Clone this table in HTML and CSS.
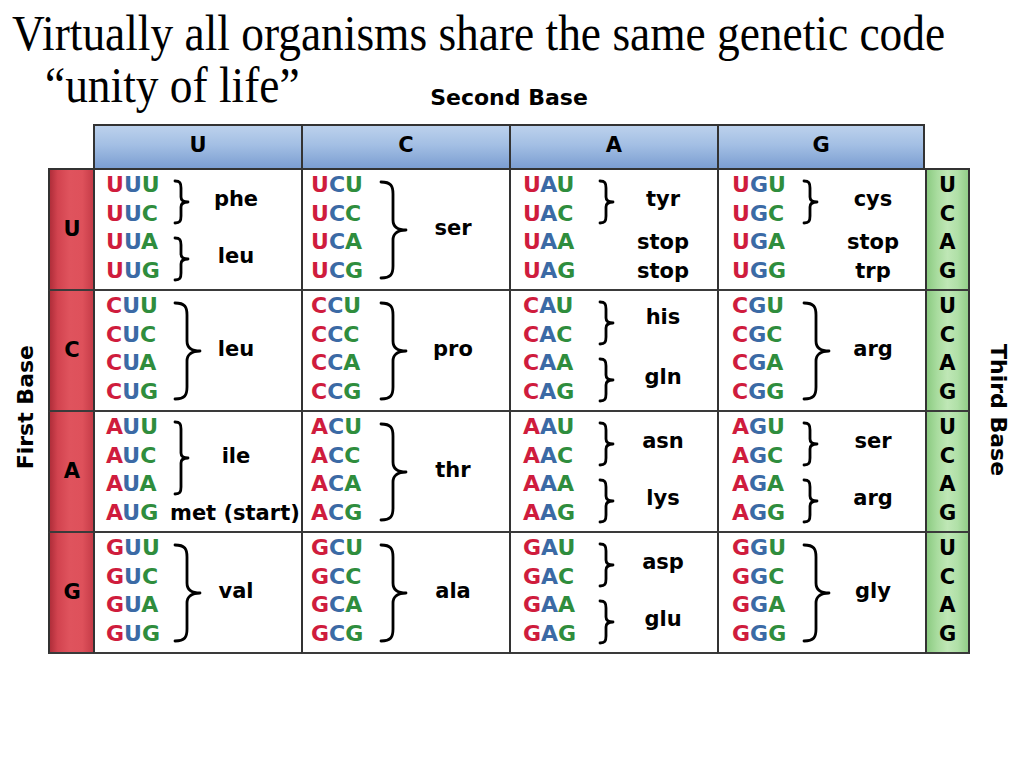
FILE: index.html
```html
<!DOCTYPE html>
<html>
<head>
<meta charset="utf-8">
<link rel="stylesheet" href="styles.css">
</head>
<body>
<div class="title">
  <div class="t1"><span class="sq">Virtually all organisms share the same genetic code</span></div>
  <div class="t2">
    <div class="quote"><span class="sq">“unity of life”</span></div>
    <div class="second">Second Base</div>
  </div>
</div>

<div class="table">
  <div class="hd h1">U</div>
  <div class="hd h2">C</div>
  <div class="hd h3">A</div>
  <div class="hd h4">G</div>

  <div class="firstbase">First Base</div>
  <div class="thirdbase">Third Base</div>

  <!-- Row U -->
  <div class="rc row1 first">U</div>
  <div class="cell cu row1">
    <div class="cod"><i class="r">U</i><i class="b">U</i><i class="g">U</i></div>
    <div class="cod"><i class="r">U</i><i class="b">U</i><i class="g">C</i></div>
    <div class="cod"><i class="r">U</i><i class="b">U</i><i class="g">A</i></div>
    <div class="cod"><i class="r">U</i><i class="b">U</i><i class="g">G</i></div>
    <svg class="brace b2 r12" viewBox="0 0 18 46"><path d="M2,2 C7,2 8,4 8,9 L8,18 C8,21 10,23 15,23 C10,23 8,25 8,28 L8,37 C8,42 7,44 2,44"/></svg>
    <div class="aa r12">phe</div>
    <svg class="brace b2 r34" viewBox="0 0 18 46"><path d="M2,2 C7,2 8,4 8,9 L8,18 C8,21 10,23 15,23 C10,23 8,25 8,28 L8,37 C8,42 7,44 2,44"/></svg>
    <div class="aa r34">leu</div>
  </div>
  <div class="cell cc row1">
    <div class="cod"><i class="r">U</i><i class="b">C</i><i class="g">U</i></div>
    <div class="cod"><i class="r">U</i><i class="b">C</i><i class="g">C</i></div>
    <div class="cod"><i class="r">U</i><i class="b">C</i><i class="g">A</i></div>
    <div class="cod"><i class="r">U</i><i class="b">C</i><i class="g">G</i></div>
    <svg class="brace b4 r14" viewBox="0 0 30 100"><path d="M2,2 C12,2 14,6 14,14 L14,40 C14,46 18,50 27,50 C18,50 14,54 14,60 L14,86 C14,94 12,98 2,98"/></svg>
    <div class="aa r14">ser</div>
  </div>
  <div class="cell ca row1">
    <div class="cod"><i class="r">U</i><i class="b">A</i><i class="g">U</i></div>
    <div class="cod"><i class="r">U</i><i class="b">A</i><i class="g">C</i></div>
    <div class="cod"><i class="r">U</i><i class="b">A</i><i class="g">A</i></div>
    <div class="cod"><i class="r">U</i><i class="b">A</i><i class="g">G</i></div>
    <svg class="brace b2 r12" viewBox="0 0 18 46"><path d="M2,2 C7,2 8,4 8,9 L8,18 C8,21 10,23 15,23 C10,23 8,25 8,28 L8,37 C8,42 7,44 2,44"/></svg>
    <div class="aa r12">tyr</div>
    <div class="aa r3">stop</div>
    <div class="aa r4">stop</div>
  </div>
  <div class="cell cg row1">
    <div class="cod"><i class="r">U</i><i class="b">G</i><i class="g">U</i></div>
    <div class="cod"><i class="r">U</i><i class="b">G</i><i class="g">C</i></div>
    <div class="cod"><i class="r">U</i><i class="b">G</i><i class="g">A</i></div>
    <div class="cod"><i class="r">U</i><i class="b">G</i><i class="g">G</i></div>
    <svg class="brace b2 r12" viewBox="0 0 18 46"><path d="M2,2 C7,2 8,4 8,9 L8,18 C8,21 10,23 15,23 C10,23 8,25 8,28 L8,37 C8,42 7,44 2,44"/></svg>
    <div class="aa r12">cys</div>
    <div class="aa r3">stop</div>
    <div class="aa r4">trp</div>
  </div>
  <div class="gc row1 first"><span>U</span><span>C</span><span>A</span><span>G</span></div>

  <!-- Row C -->
  <div class="rc row2">C</div>
  <div class="cell cu row2">
    <div class="cod"><i class="r">C</i><i class="b">U</i><i class="g">U</i></div>
    <div class="cod"><i class="r">C</i><i class="b">U</i><i class="g">C</i></div>
    <div class="cod"><i class="r">C</i><i class="b">U</i><i class="g">A</i></div>
    <div class="cod"><i class="r">C</i><i class="b">U</i><i class="g">G</i></div>
    <svg class="brace b4 r14" viewBox="0 0 30 100"><path d="M2,2 C12,2 14,6 14,14 L14,40 C14,46 18,50 27,50 C18,50 14,54 14,60 L14,86 C14,94 12,98 2,98"/></svg>
    <div class="aa r14">leu</div>
  </div>
  <div class="cell cc row2">
    <div class="cod"><i class="r">C</i><i class="b">C</i><i class="g">U</i></div>
    <div class="cod"><i class="r">C</i><i class="b">C</i><i class="g">C</i></div>
    <div class="cod"><i class="r">C</i><i class="b">C</i><i class="g">A</i></div>
    <div class="cod"><i class="r">C</i><i class="b">C</i><i class="g">G</i></div>
    <svg class="brace b4 r14" viewBox="0 0 30 100"><path d="M2,2 C12,2 14,6 14,14 L14,40 C14,46 18,50 27,50 C18,50 14,54 14,60 L14,86 C14,94 12,98 2,98"/></svg>
    <div class="aa r14">pro</div>
  </div>
  <div class="cell ca row2">
    <div class="cod"><i class="r">C</i><i class="b">A</i><i class="g">U</i></div>
    <div class="cod"><i class="r">C</i><i class="b">A</i><i class="g">C</i></div>
    <div class="cod"><i class="r">C</i><i class="b">A</i><i class="g">A</i></div>
    <div class="cod"><i class="r">C</i><i class="b">A</i><i class="g">G</i></div>
    <svg class="brace b2 r12" viewBox="0 0 18 46"><path d="M2,2 C7,2 8,4 8,9 L8,18 C8,21 10,23 15,23 C10,23 8,25 8,28 L8,37 C8,42 7,44 2,44"/></svg>
    <div class="aa r12 up">his</div>
    <svg class="brace b2 r34" viewBox="0 0 18 46"><path d="M2,2 C7,2 8,4 8,9 L8,18 C8,21 10,23 15,23 C10,23 8,25 8,28 L8,37 C8,42 7,44 2,44"/></svg>
    <div class="aa r34">gln</div>
  </div>
  <div class="cell cg row2">
    <div class="cod"><i class="r">C</i><i class="b">G</i><i class="g">U</i></div>
    <div class="cod"><i class="r">C</i><i class="b">G</i><i class="g">C</i></div>
    <div class="cod"><i class="r">C</i><i class="b">G</i><i class="g">A</i></div>
    <div class="cod"><i class="r">C</i><i class="b">G</i><i class="g">G</i></div>
    <svg class="brace b4 r14" viewBox="0 0 30 100"><path d="M2,2 C12,2 14,6 14,14 L14,40 C14,46 18,50 27,50 C18,50 14,54 14,60 L14,86 C14,94 12,98 2,98"/></svg>
    <div class="aa r14">arg</div>
  </div>
  <div class="gc row2"><span>U</span><span>C</span><span>A</span><span>G</span></div>

  <!-- Row A -->
  <div class="rc row3">A</div>
  <div class="cell cu row3">
    <div class="cod"><i class="r">A</i><i class="b">U</i><i class="g">U</i></div>
    <div class="cod"><i class="r">A</i><i class="b">U</i><i class="g">C</i></div>
    <div class="cod"><i class="r">A</i><i class="b">U</i><i class="g">A</i></div>
    <div class="cod"><i class="r">A</i><i class="b">U</i><i class="g">G</i></div>
    <svg class="brace b3 r13" viewBox="0 0 18 76"><path d="M2,2 C7,2 8,4 8,9 L8,33 C8,36 10,38 15,38 C10,38 8,40 8,43 L8,67 C8,72 7,74 2,74"/></svg>
    <div class="aa r13">ile</div>
    <div class="aa r4 met">met (start)</div>
  </div>
  <div class="cell cc row3">
    <div class="cod"><i class="r">A</i><i class="b">C</i><i class="g">U</i></div>
    <div class="cod"><i class="r">A</i><i class="b">C</i><i class="g">C</i></div>
    <div class="cod"><i class="r">A</i><i class="b">C</i><i class="g">A</i></div>
    <div class="cod"><i class="r">A</i><i class="b">C</i><i class="g">G</i></div>
    <svg class="brace b4 r14" viewBox="0 0 30 100"><path d="M2,2 C12,2 14,6 14,14 L14,40 C14,46 18,50 27,50 C18,50 14,54 14,60 L14,86 C14,94 12,98 2,98"/></svg>
    <div class="aa r14">thr</div>
  </div>
  <div class="cell ca row3">
    <div class="cod"><i class="r">A</i><i class="b">A</i><i class="g">U</i></div>
    <div class="cod"><i class="r">A</i><i class="b">A</i><i class="g">C</i></div>
    <div class="cod"><i class="r">A</i><i class="b">A</i><i class="g">A</i></div>
    <div class="cod"><i class="r">A</i><i class="b">A</i><i class="g">G</i></div>
    <svg class="brace b2 r12" viewBox="0 0 18 46"><path d="M2,2 C7,2 8,4 8,9 L8,18 C8,21 10,23 15,23 C10,23 8,25 8,28 L8,37 C8,42 7,44 2,44"/></svg>
    <div class="aa r12">asn</div>
    <svg class="brace b2 r34" viewBox="0 0 18 46"><path d="M2,2 C7,2 8,4 8,9 L8,18 C8,21 10,23 15,23 C10,23 8,25 8,28 L8,37 C8,42 7,44 2,44"/></svg>
    <div class="aa r34">lys</div>
  </div>
  <div class="cell cg row3">
    <div class="cod"><i class="r">A</i><i class="b">G</i><i class="g">U</i></div>
    <div class="cod"><i class="r">A</i><i class="b">G</i><i class="g">C</i></div>
    <div class="cod"><i class="r">A</i><i class="b">G</i><i class="g">A</i></div>
    <div class="cod"><i class="r">A</i><i class="b">G</i><i class="g">G</i></div>
    <svg class="brace b2 r12" viewBox="0 0 18 46"><path d="M2,2 C7,2 8,4 8,9 L8,18 C8,21 10,23 15,23 C10,23 8,25 8,28 L8,37 C8,42 7,44 2,44"/></svg>
    <div class="aa r12">ser</div>
    <svg class="brace b2 r34" viewBox="0 0 18 46"><path d="M2,2 C7,2 8,4 8,9 L8,18 C8,21 10,23 15,23 C10,23 8,25 8,28 L8,37 C8,42 7,44 2,44"/></svg>
    <div class="aa r34">arg</div>
  </div>
  <div class="gc row3"><span>U</span><span>C</span><span>A</span><span>G</span></div>

  <!-- Row G -->
  <div class="rc row4">G</div>
  <div class="cell cu row4">
    <div class="cod"><i class="r">G</i><i class="b">U</i><i class="g">U</i></div>
    <div class="cod"><i class="r">G</i><i class="b">U</i><i class="g">C</i></div>
    <div class="cod"><i class="r">G</i><i class="b">U</i><i class="g">A</i></div>
    <div class="cod"><i class="r">G</i><i class="b">U</i><i class="g">G</i></div>
    <svg class="brace b4 r14" viewBox="0 0 30 100"><path d="M2,2 C12,2 14,6 14,14 L14,40 C14,46 18,50 27,50 C18,50 14,54 14,60 L14,86 C14,94 12,98 2,98"/></svg>
    <div class="aa r14">val</div>
  </div>
  <div class="cell cc row4">
    <div class="cod"><i class="r">G</i><i class="b">C</i><i class="g">U</i></div>
    <div class="cod"><i class="r">G</i><i class="b">C</i><i class="g">C</i></div>
    <div class="cod"><i class="r">G</i><i class="b">C</i><i class="g">A</i></div>
    <div class="cod"><i class="r">G</i><i class="b">C</i><i class="g">G</i></div>
    <svg class="brace b4 r14" viewBox="0 0 30 100"><path d="M2,2 C12,2 14,6 14,14 L14,40 C14,46 18,50 27,50 C18,50 14,54 14,60 L14,86 C14,94 12,98 2,98"/></svg>
    <div class="aa r14">ala</div>
  </div>
  <div class="cell ca row4">
    <div class="cod"><i class="r">G</i><i class="b">A</i><i class="g">U</i></div>
    <div class="cod"><i class="r">G</i><i class="b">A</i><i class="g">C</i></div>
    <div class="cod"><i class="r">G</i><i class="b">A</i><i class="g">A</i></div>
    <div class="cod"><i class="r">G</i><i class="b">A</i><i class="g">G</i></div>
    <svg class="brace b2 r12" viewBox="0 0 18 46"><path d="M2,2 C7,2 8,4 8,9 L8,18 C8,21 10,23 15,23 C10,23 8,25 8,28 L8,37 C8,42 7,44 2,44"/></svg>
    <div class="aa r12">asp</div>
    <svg class="brace b2 r34" viewBox="0 0 18 46"><path d="M2,2 C7,2 8,4 8,9 L8,18 C8,21 10,23 15,23 C10,23 8,25 8,28 L8,37 C8,42 7,44 2,44"/></svg>
    <div class="aa r34">glu</div>
  </div>
  <div class="cell cg row4">
    <div class="cod"><i class="r">G</i><i class="b">G</i><i class="g">U</i></div>
    <div class="cod"><i class="r">G</i><i class="b">G</i><i class="g">C</i></div>
    <div class="cod"><i class="r">G</i><i class="b">G</i><i class="g">A</i></div>
    <div class="cod"><i class="r">G</i><i class="b">G</i><i class="g">G</i></div>
    <svg class="brace b4 r14" viewBox="0 0 30 100"><path d="M2,2 C12,2 14,6 14,14 L14,40 C14,46 18,50 27,50 C18,50 14,54 14,60 L14,86 C14,94 12,98 2,98"/></svg>
    <div class="aa r14">gly</div>
  </div>
  <div class="gc row4"><span>U</span><span>C</span><span>A</span><span>G</span></div>
</div>
</body>
</html>
```

FILE: styles.css
```css
* { box-sizing: border-box; }

html, body {
  margin: 0;
  padding: 0;
  background: #ffffff;
}

body {
  width: 1024px;
  height: 768px;
  overflow: hidden;
  font-family: "DejaVu Sans", "Liberation Sans", sans-serif;
  font-weight: bold;
  color: #000;
}

/* ---------- Title ---------- */
.title {
  font-family: "Liberation Serif", "Times New Roman", serif;
  font-weight: normal;
  font-size: 50px;
  line-height: 50px;
  padding-top: 8px;
}

.sq {
  display: inline-block;
  white-space: nowrap;
  transform: scaleX(0.908);
  transform-origin: left center;
}

.t1 {
  padding-left: 12px;
  height: 50px;
}

.t2 {
  display: grid;
  grid-template-columns: 93px 832px;
  height: 50px;
}

.quote {
  grid-column: 1 / 3;
  grid-row: 1;
  padding-left: 45px;
  padding-top: 2px;
}

.second {
  grid-column: 2;
  grid-row: 1;
  justify-self: center;
  align-self: start;
  margin-top: 29px;
  font-family: "DejaVu Sans", sans-serif;
  font-weight: bold;
  font-size: 22px;
  line-height: 22px;
}

/* ---------- Table ---------- */
.table {
  display: grid;
  grid-template-columns: 48px 45px 208px 208px 208px 208px 45px 1fr;
  grid-template-rows: 46px repeat(4, 121px);
  margin-top: 16px;
}

.hd {
  grid-row: 1;
  border-top: 2px solid #333;
  border-bottom: 2px solid #333;
  border-left: 2px solid #333;
  background: linear-gradient(180deg, #bcd1ec 0%, #a3bfe4 45%, #8aaad8 80%, #7c9ed2 100%);
  display: flex;
  align-items: center;
  justify-content: center;
  font-size: 21px;
  padding-bottom: 4px;
}
.h1 { grid-column: 3; }
.h2 { grid-column: 4; }
.h3 { grid-column: 5; }
.h4 { grid-column: 6; border-right: 2px solid #333; }

.row1 { grid-row: 2; }
.row2 { grid-row: 3; }
.row3 { grid-row: 4; }
.row4 { grid-row: 5; }

.firstbase {
  grid-column: 1;
  grid-row: 2 / 6;
  writing-mode: vertical-rl;
  transform: rotate(180deg);
  align-self: center;
  justify-self: center;
  font-size: 22px;
  margin-bottom: 10px;
  margin-left: 3px;
}

.thirdbase {
  grid-column: 8;
  grid-row: 2 / 6;
  writing-mode: vertical-rl;
  align-self: center;
  justify-self: start;
  margin-left: 16px;
  font-size: 22px;
  margin-bottom: 4px;
}

.rc {
  grid-column: 2;
  border-left: 2px solid #333;
  border-bottom: 2px solid #3a3a3a;
  background: linear-gradient(90deg, #b02e3a 0%, #d2434f 18%, #df535d 45%, #de515b 75%, #c63c48 100%);
  display: flex;
  align-items: center;
  justify-content: center;
  font-size: 21px;
  padding-left: 1px;
  padding-bottom: 2px;
}

.gc {
  grid-column: 7;
  border-left: 2px solid #333;
  border-right: 2px solid #333;
  border-bottom: 2px solid #3a3a3a;
  background: linear-gradient(90deg, #8ccb82 0%, #a9dc9f 25%, #bfe7b6 50%, #b0e0a7 75%, #93cf89 100%);
  display: grid;
  grid-template-rows: repeat(4, 28.5px);
  padding-top: 1px;
  font-size: 21px;
  line-height: 28.5px;
  text-align: center;
}

.rc.first, .gc.first {
  border-top: 2px solid #333;
  margin-top: -2px;
}

.cell {
  border-left: 2px solid #333;
  border-bottom: 2px solid #3a3a3a;
  background: #fff;
  display: grid;
  grid-template-rows: repeat(4, 28.5px);
  padding-top: 1px;
}

.cu { grid-column: 3; padding-left: 11px; grid-template-columns: 67px 26px 74px; }
.cc { grid-column: 4; padding-left: 8px;  grid-template-columns: 68px 32px 84px; }
.ca { grid-column: 5; padding-left: 12px; grid-template-columns: 75px 26px 78px; }
.cg { grid-column: 6; padding-left: 13px; grid-template-columns: 70px 28px 86px; }

.cod {
  grid-column: 1;
  font-size: 22px;
  line-height: 28.5px;
  white-space: nowrap;
}
.cod:nth-child(1) { grid-row: 1; }
.cod:nth-child(2) { grid-row: 2; }
.cod:nth-child(3) { grid-row: 3; }
.cod:nth-child(4) { grid-row: 4; }

.cod i { font-style: normal; }
.r { color: #cf1c3d; }
.b { color: #3b6aa5; }
.g { color: #2f8d3d; }

.brace {
  grid-column: 2;
  align-self: center;
  justify-self: start;
  display: block;
  overflow: visible;
  margin-top: 4px;
}
.brace path {
  fill: none;
  stroke: #000;
  stroke-width: 2.8;
  stroke-linecap: round;
  stroke-linejoin: round;
}
.b2 { width: 18px; height: 46px; }
.b3 { width: 18px; height: 76px; }
.b4 { width: 30px; height: 100px; }

.aa {
  grid-column: 3;
  align-self: center;
  text-align: center;
  font-size: 21px;
  line-height: 28.5px;
  white-space: nowrap;
}
.aa.up { margin-bottom: 6px; }

.r12 { grid-row: 1 / 3; }
.r34 { grid-row: 3 / 5; }
.r14 { grid-row: 1 / 5; }
.r13 { grid-row: 1 / 4; }
.r3 { grid-row: 3; }
.r4 { grid-row: 4; }

.aa.met {
  grid-column: 2 / 4;
  justify-self: start;
  text-align: left;
  margin-left: -3px;
}
```
